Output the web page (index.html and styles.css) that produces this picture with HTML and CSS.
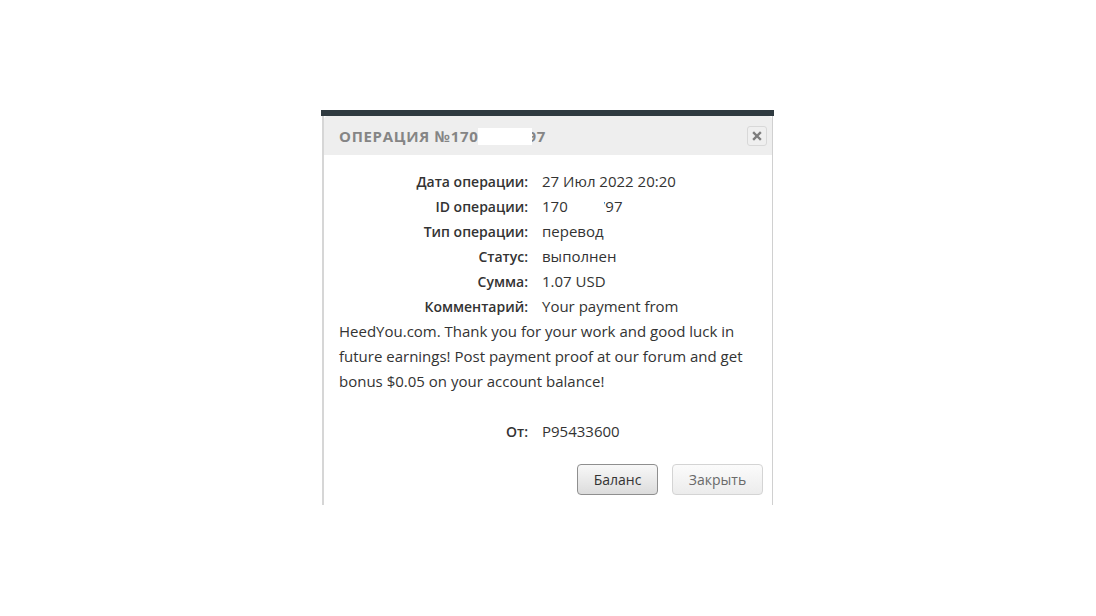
FILE: index.html
```html
<!DOCTYPE html>
<html lang="ru">
<head>
  <meta charset="UTF-8">
  <title>Операция</title>
  <link rel="stylesheet" href="styles.css">
</head>
<body>

  <div class="dialog">
    <div class="panel">
      <div class="titlebar">
        <span class="title">Операция №170<span class="hide-title"></span>97</span>
        <button class="close" title="Закрыть">
          <svg width="10" height="10" viewBox="0 0 10 10">
            <path d="M2 2 L8 8 M8 2 L2 8" stroke="#7d7d7d" stroke-width="2.4" stroke-linecap="square"/>
          </svg>
        </button>
      </div>

      <div class="content">
        <div class="row"><span class="label">Дата операции:</span>27 Июл 2022 20:20</div>
        <div class="row"><span class="label">ID операции:</span>170<span class="hide-id"></span>797</div>
        <div class="row"><span class="label">Тип операции:</span>перевод</div>
        <div class="row"><span class="label">Статус:</span>выполнен</div>
        <div class="row"><span class="label">Сумма:</span>1.07 USD</div>
        <p class="comment"><span class="label">Комментарий:</span>Your payment from HeedYou.com. Thank you for your work and good luck in future earnings! Post payment proof at our forum and get bonus $0.05 on your account balance!</p>
        <div class="row"><span class="label">От:</span>P95433600</div>

        <div class="buttons">
          <button class="btn btn-main">Баланс</button>
          <button class="btn btn-light">Закрыть</button>
        </div>
      </div>
    </div>
  </div>

</body>
</html>
```

FILE: styles.css
```css
body {
  margin: 0;
  background-color: #fff;
  font-family: 'Open Sans', 'Noto Sans', sans-serif;
  color: #333;
}

.dialog {
  width: 451px;
  margin: 110px 0 0 321px;
  padding: 0 1px;
  border-top: 6px solid #2f3a40;
}

.panel {
  border-left: 2px solid #d6d6d6;
  border-right: 1px solid #d0d0d0;
  background-color: #fff;
}

.titlebar {
  height: 39px;
  display: flex;
  align-items: center;
  justify-content: space-between;
  padding: 0 5px 0 15px;
  background-color: #eeeeee;
  border-radius: 4px 4px 0 0;
}

.title {
  font-size: 15px;
  font-weight: 700;
  letter-spacing: 0.7px;
  text-transform: uppercase;
  color: #858585;
}

.hide-title {
  display: inline-block;
  width: 54px;
  height: 17px;
  margin: 0 -5px -3px 0;
  background-color: #fff;
  vertical-align: baseline;
  position: relative;
}

.close {
  width: 20px;
  height: 20px;
  padding: 0;
  display: flex;
  align-items: center;
  justify-content: center;
  border: 1px solid #d8d8d8;
  border-radius: 3px;
  background-color: #efefef;
}

.content {
  padding: 14px 9px 10px 15px;
  font-size: 15px;
  line-height: 25px;
}

.comment {
  margin: 0 0 25px;
}

.label {
  display: inline-block;
  width: 189px;
  margin-right: 14px;
  text-align: right;
  font-size: 14px;
  font-weight: 600;
  color: #333;
}

.hide-id {
  display: inline-block;
  width: 36px;
  height: 14px;
  margin-right: -7px;
  background-color: #fff;
  position: relative;
}

.buttons {
  display: flex;
  justify-content: flex-end;
  gap: 14px;
  margin-top: 20px;
}

.btn {
  height: 31px;
  padding: 0 10px;
  font-family: 'Open Sans', sans-serif;
  font-size: 14px;
  border-radius: 4px;
  cursor: pointer;
}

.btn-main {
  width: 81px;
  color: #333;
  border: 1px solid #8f8f8f;
  background: linear-gradient(#f8f8f8, #dcdcdc);
}

.btn-light {
  width: 91px;
  color: #6a6a6a;
  border: 1px solid #d4d4d4;
  background: linear-gradient(#fbfbfb, #ececec);
}
```
